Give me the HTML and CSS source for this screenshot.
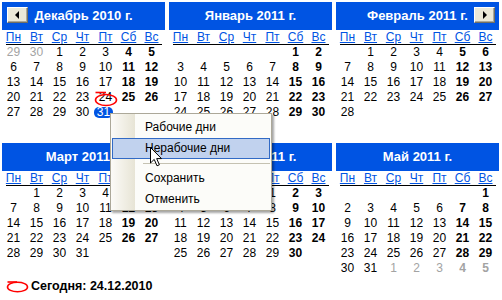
FILE: index.html
```html
<!DOCTYPE html>
<html lang="ru">
<head>
<meta charset="utf-8">
<title>Календарь</title>
<link rel="stylesheet" href="styles.css">
</head>
<body>
<div class="page">
  <div class="months">
    <div class="month">
      <div class="head"><span class="nav prev"><i></i></span>Декабрь 2010 г.</div>
      <div class="wk"><span>Пн</span><span>Вт</span><span>Ср</span><span>Чт</span><span>Пт</span><span>Сб</span><span>Вс</span></div>
      <div class="rule"></div>
      <div class="grid">
        <span class="g">29</span><span class="g">30</span><span>1</span><span>2</span><span>3</span><span class="b">4</span><span class="b">5</span>
        <span>6</span><span>7</span><span>8</span><span>9</span><span>10</span><span class="b">11</span><span class="b">12</span>
        <span>13</span><span>14</span><span>15</span><span>16</span><span>17</span><span class="b">18</span><span class="b">19</span>
        <span>20</span><span>21</span><span>22</span><span>23</span><span class="tday">24<svg class="ring" width="26" height="17" viewBox="0 0 26 17"><path d="M1.5 2.5 H12" fill="none" stroke="#f00" stroke-width="1.6"/><ellipse cx="12" cy="10" rx="10.5" ry="5.5" fill="none" stroke="#f00" stroke-width="1.6"/></svg></span><span class="b">25</span><span class="b">26</span>
        <span>27</span><span>28</span><span>29</span><span>30</span><span><b class="sel">31</b></span>
      </div>
    </div>
    <div class="month">
      <div class="head">Январь 2011 г.</div>
      <div class="wk"><span>Пн</span><span>Вт</span><span>Ср</span><span>Чт</span><span>Пт</span><span>Сб</span><span>Вс</span></div>
      <div class="rule"></div>
      <div class="grid">
        <span class="b c6">1</span><span class="b">2</span>
        <span>3</span><span>4</span><span>5</span><span>6</span><span>7</span><span class="b">8</span><span class="b">9</span>
        <span>10</span><span>11</span><span>12</span><span>13</span><span>14</span><span class="b">15</span><span class="b">16</span>
        <span>17</span><span>18</span><span>19</span><span>20</span><span>21</span><span class="b">22</span><span class="b">23</span>
        <span>24</span><span>25</span><span>26</span><span>27</span><span>28</span><span class="b">29</span><span class="b">30</span>
        <span>31</span>
      </div>
    </div>
    <div class="month">
      <div class="head"><span class="nav next"><i></i></span>Февраль 2011 г.</div>
      <div class="wk"><span>Пн</span><span>Вт</span><span>Ср</span><span>Чт</span><span>Пт</span><span>Сб</span><span>Вс</span></div>
      <div class="rule"></div>
      <div class="grid">
        <span class="c2">1</span><span>2</span><span>3</span><span>4</span><span class="b">5</span><span class="b">6</span>
        <span>7</span><span>8</span><span>9</span><span>10</span><span>11</span><span class="b">12</span><span class="b">13</span>
        <span>14</span><span>15</span><span>16</span><span>17</span><span>18</span><span class="b">19</span><span class="b">20</span>
        <span>21</span><span>22</span><span>23</span><span>24</span><span>25</span><span class="b">26</span><span class="b">27</span>
        <span>28</span>
      </div>
    </div>
    <div class="month">
      <div class="head">Март 2011 г.</div>
      <div class="wk"><span>Пн</span><span>Вт</span><span>Ср</span><span>Чт</span><span>Пт</span><span>Сб</span><span>Вс</span></div>
      <div class="rule"></div>
      <div class="grid">
        <span class="c2">1</span><span>2</span><span>3</span><span>4</span><span class="b">5</span><span class="b">6</span>
        <span>7</span><span>8</span><span>9</span><span>10</span><span>11</span><span class="b">12</span><span class="b">13</span>
        <span>14</span><span>15</span><span>16</span><span>17</span><span>18</span><span class="b">19</span><span class="b">20</span>
        <span>21</span><span>22</span><span>23</span><span>24</span><span>25</span><span class="b">26</span><span class="b">27</span>
        <span>28</span><span>29</span><span>30</span><span>31</span>
      </div>
    </div>
    <div class="month">
      <div class="head">Апрель 2011 г.</div>
      <div class="wk"><span>Пн</span><span>Вт</span><span>Ср</span><span>Чт</span><span>Пт</span><span>Сб</span><span>Вс</span></div>
      <div class="rule"></div>
      <div class="grid">
        <span class="c5">1</span><span class="b">2</span><span class="b">3</span>
        <span>4</span><span>5</span><span>6</span><span>7</span><span>8</span><span class="b">9</span><span class="b">10</span>
        <span>11</span><span>12</span><span>13</span><span>14</span><span>15</span><span class="b">16</span><span class="b">17</span>
        <span>18</span><span>19</span><span>20</span><span>21</span><span>22</span><span class="b">23</span><span class="b">24</span>
        <span>25</span><span>26</span><span>27</span><span>28</span><span>29</span><span class="b">30</span>
      </div>
    </div>
    <div class="month">
      <div class="head">Май 2011 г.</div>
      <div class="wk"><span>Пн</span><span>Вт</span><span>Ср</span><span>Чт</span><span>Пт</span><span>Сб</span><span>Вс</span></div>
      <div class="rule"></div>
      <div class="grid">
        <span class="b c7">1</span>
        <span>2</span><span>3</span><span>4</span><span>5</span><span>6</span><span class="b">7</span><span class="b">8</span>
        <span>9</span><span>10</span><span>11</span><span>12</span><span>13</span><span class="b">14</span><span class="b">15</span>
        <span>16</span><span>17</span><span>18</span><span>19</span><span>20</span><span class="b">21</span><span class="b">22</span>
        <span>23</span><span>24</span><span>25</span><span>26</span><span>27</span><span class="b">28</span><span class="b">29</span>
        <span>30</span><span>31</span><span class="g">1</span><span class="g">2</span><span class="g">3</span><span class="g b">4</span><span class="g b">5</span>
      </div>
    </div>
  </div>
  <div class="today">
    <svg width="23" height="13" viewBox="0 0 23 13"><path d="M1.5 2 H11" fill="none" stroke="#f00" stroke-width="1.6"/><ellipse cx="11.5" cy="7" rx="10" ry="4.8" fill="none" stroke="#f00" stroke-width="1.6"/></svg>
    <span>Сегодня: 24.12.2010</span>
  </div>

  <div class="menu">
    <div class="item">Рабочие дни</div>
    <div class="item hot">Нерабочие дни</div>
    <div class="sep"></div>
    <div class="item">Сохранить</div>
    <div class="item">Отменить</div>
  </div>
  <svg class="cursor" width="13" height="20" viewBox="0 0 13 20"><path d="M0.5 0.5 V16 L4.2 12.4 L7 18.8 L9.4 17.8 L6.7 11.6 H11.5 Z" fill="#fff" stroke="#000" stroke-width="1" stroke-linejoin="miter"/></svg>
</div>
</body>
</html>
```

FILE: styles.css
```css
html, body {
  margin: 0;
  background: #fff;
}
body {
  font-family: "Liberation Sans", Arial, sans-serif;
  font-size: 12px;
  color: #000;
}
.page {
  position: relative;
  width: 502px;
  height: 300px;
  padding: 2px 0 0 2px;
  box-sizing: border-box;
  overflow: hidden;
}
.months {
  display: grid;
  grid-template-columns: repeat(3, 163px);
  column-gap: 4px;
  row-gap: 8px;
}
.month {
  display: flex;
  flex-direction: column;
}
.head {
  position: relative;
  height: 28px;
  line-height: 28px;
  background: #0054e3;
  color: #fff;
  font-weight: bold;
  font-size: 13px;
  text-align: center;
}
.nav {
  position: absolute;
  top: 5px;
  width: 21px;
  height: 16px;
  box-sizing: border-box;
  background: #ece9d8;
  border: 1px solid;
  border-color: #fff #716f64 #716f64 #fff;
  box-shadow: inset -1px -1px 0 #aca899;
  display: flex;
  align-items: center;
  justify-content: center;
}
.nav.prev { left: 5px; }
.nav.next { left: 138px; }
.nav i {
  display: block;
  width: 0;
  height: 0;
  border-top: 4px solid transparent;
  border-bottom: 4px solid transparent;
}
.prev i { border-right: 4px solid #000; margin-left: -2px; }
.next i { border-left: 4px solid #000; margin-left: 1px; }
.wk {
  display: grid;
  grid-template-columns: repeat(7, 23px);
  height: 14px;
  line-height: 14px;
  color: #0054e3;
  text-decoration: underline;
  text-align: center;
}
.rule {
  height: 1px;
  background: #000;
  margin: 0 3px 0 4px;
}
.grid {
  display: grid;
  grid-template-columns: repeat(7, 23px);
  grid-template-rows: repeat(6, 15px);
  line-height: 15px;
  text-align: center;
}
.b { font-weight: bold; }
.g { color: #a3a3a3; }
.c2 { grid-column-start: 2; }
.c5 { grid-column-start: 5; }
.c6 { grid-column-start: 6; }
.c7 { grid-column-start: 7; }
.tday { position: relative; }
.ring {
  position: absolute;
  left: 0;
  top: 0;
}
.sel {
  display: inline-block;
  font-weight: normal;
  color: #fff;
  background: #0054e3;
  height: 11px;
  line-height: 11px;
  padding: 0 3px;
  border-radius: 5px;
  margin-left: -4px;
}
.today {
  display: flex;
  align-items: center;
  gap: 2px;
  margin-top: 3px;
  padding-left: 4px;
  height: 14px;
  font-weight: bold;
  font-size: 12.5px;
}
.menu {
  position: absolute;
  left: 110px;
  top: 113px;
  width: 162px;
  box-sizing: border-box;
  border: 1px solid #aca899;
  padding: 3px 0 0;
  background: linear-gradient(to right, #fcfbf8 0px, #e7e4d5 24px, #fcfcf9 24px);
  box-shadow: 2px 2px 2px rgba(0, 0, 0, 0.35);
  font-size: 12px;
  z-index: 2;
}
.item {
  height: 21px;
  line-height: 21px;
  padding-left: 33px;
  margin: 0 1px;
}
.item.hot {
  background: #c1d2ee;
  border: 1px solid #316ac5;
  line-height: 19px;
  padding-left: 32px;
  box-sizing: border-box;
}
.sep {
  height: 1px;
  background: #c5c2b2;
  margin: 4px 1px 4px 32px;
}
.cursor {
  position: absolute;
  left: 150px;
  top: 147px;
  z-index: 3;
}
```
